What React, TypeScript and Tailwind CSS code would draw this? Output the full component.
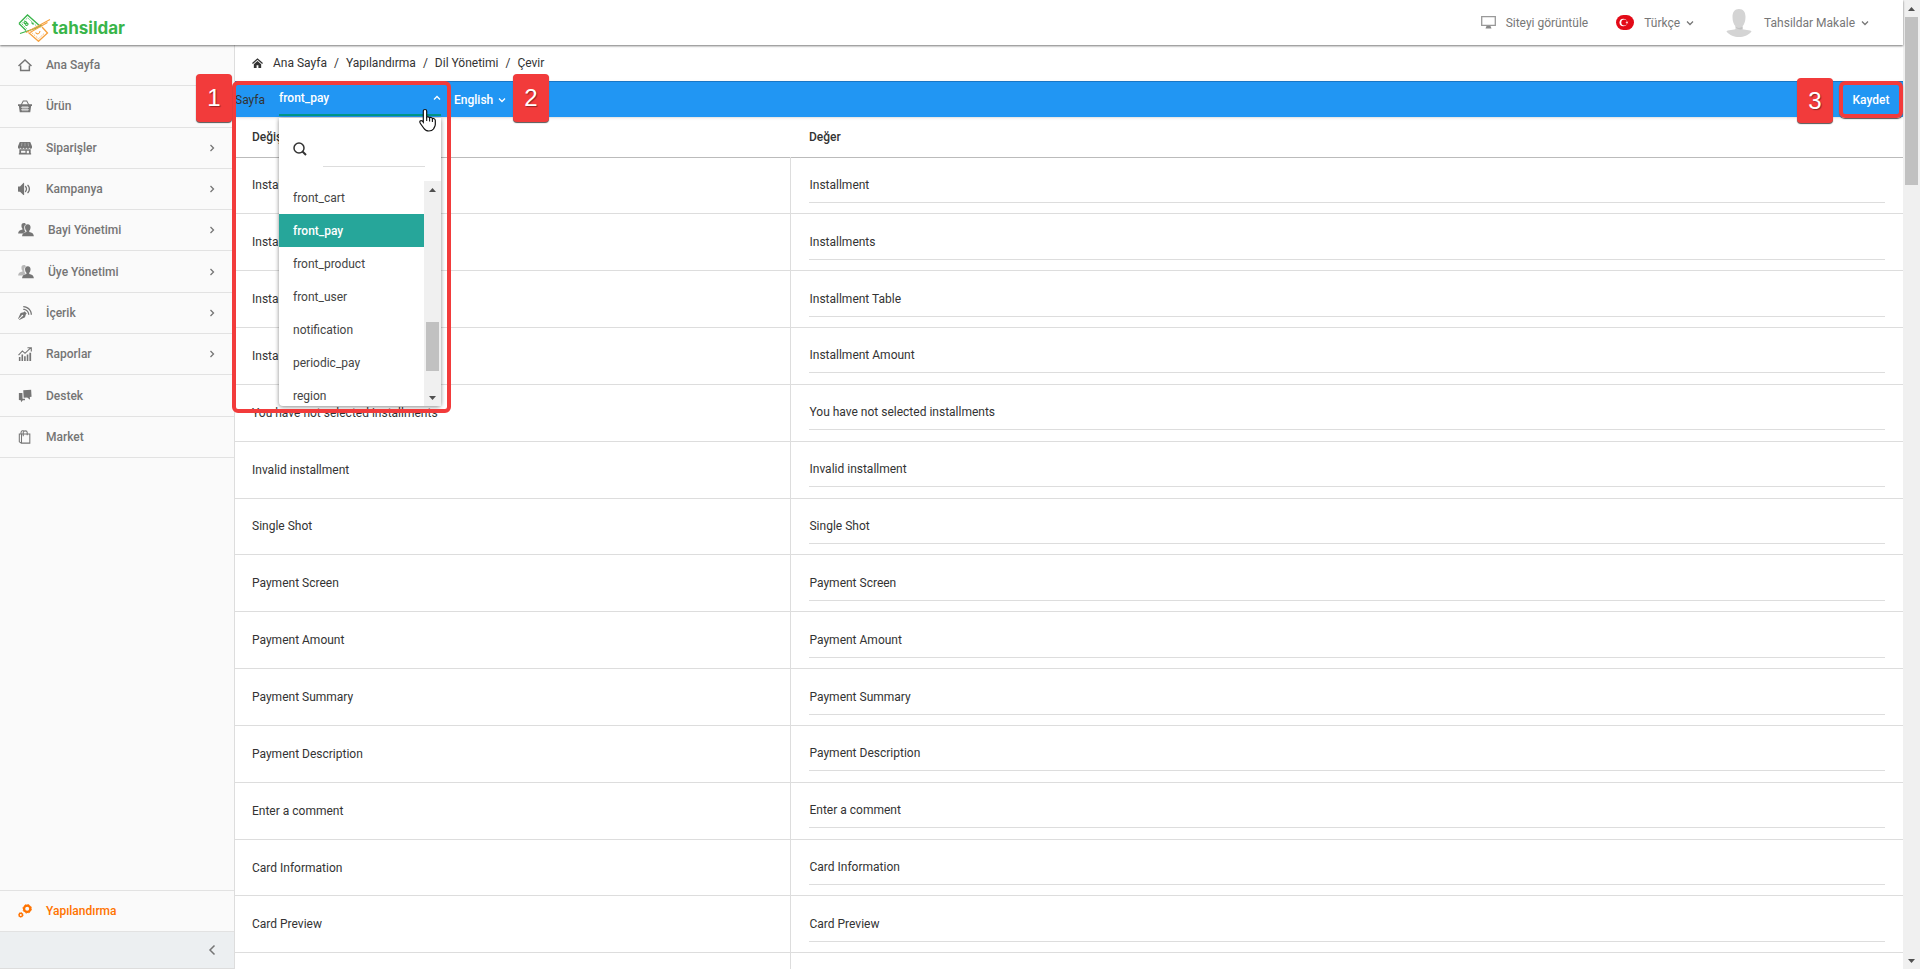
import { useState, type ReactNode, type SVGProps } from 'react';
import { ImBlog, ImVolumeMedium } from 'react-icons/im';

type IconProps = SVGProps<SVGSVGElement>;

interface NavEntry {
  label: string;
  icon: ReactNode;
  expandable?: boolean;
}

const ROWS = [
  'Installment',
  'Installments',
  'Installment Table',
  'Installment Amount',
  'You have not selected installments',
  'Invalid installment',
  'Single Shot',
  'Payment Screen',
  'Payment Amount',
  'Payment Summary',
  'Payment Description',
  'Enter a comment',
  'Card Information',
  'Card Preview',
];

const PAGES = [
  'front_cart',
  'front_pay',
  'front_product',
  'front_user',
  'notification',
  'periodic_pay',
  'region',
];

const CRUMBS = ['Ana Sayfa', 'Yapılandırma', 'Dil Yönetimi'];

function Chevron({ d, ...props }: IconProps & { d: string }) {
  return (
    <svg viewBox="0 0 8 8" width="8" height="8" fill="none" stroke="currentColor" strokeWidth="1.3" aria-hidden="true" {...props}>
      <path d={d} />
    </svg>
  );
}

const RIGHT = 'M2.5 1 5.5 4 2.5 7';
const DOWN = 'M1 2.5 4 5.5 7 2.5';
const UP = 'M1 5.5 4 2.5 7 5.5';

function HouseIcon() {
  return (
    <svg viewBox="0 0 16 16" width="14" height="14" fill="none" stroke="currentColor" strokeWidth="1.7" aria-hidden="true">
      <path d="M.6 9.2 8 2.2l7.4 7M3 8.5v5.8h10V8.5" />
    </svg>
  );
}

function BasketIcon() {
  return (
    <svg viewBox="0 0 16 16" width="14" height="14" aria-hidden="true">
      <path d="M3.5 7 6 2.2h4L12.5 7" fill="none" stroke="currentColor" strokeWidth="1.2" />
      <path d="M0 6h16v2h-1l-1 7H2L1 8H0z" fill="currentColor" />
      <path d="M3.5 9.5h9M3.5 12.3h9M5.7 8v6M8 8v6M10.3 8v6" stroke="#fafafa" strokeWidth=".8" />
    </svg>
  );
}

function StoreIcon() {
  return (
    <svg viewBox="0 0 16 16" width="14" height="14" fill="currentColor" aria-hidden="true">
      <path d="M2 1h12l2 5v1.300a1.500 1.500 0 0 1-3 .2 1.600 1.600 0 0 1-3.300 0 1.700 1.700 0 0 1-3.400 0 1.600 1.600 0 0 1-3.300 0A1.500 1.500 0 0 1 0 7.300V6z" />
      <path fillRule="evenodd" d="M1.500 9.500h13V14H15v1.500H1V14h.5zM3.500 11v2.500h5V11zm6.500 0v3h2.500v-3z" />
      <path d="M4.500 2 4 6M8 2v4M11.500 2l.5 4" stroke="#fafafa" strokeWidth=".4" />
    </svg>
  );
}

function UsersIcon({ faded }: { faded?: boolean }) {
  return (
    <svg viewBox="0 0 18 16" width="16" height="14" fill="currentColor" aria-hidden="true">
      <path
        opacity={faded ? 0.5 : 1}
        d="M6.800 0C4.600 0 3.600 1.400 3.800 3.500c.1 1.500.6 2.500 1.200 3v1C2 8 0 9.500 0 12h5.500c.7-1 1.700-1.600 3-2-1-1.300-1.600-3-1.500-5 0-1.600.7-2.700 2-3.300C8.500.6 7.900 0 6.800 0z"
      />
      <path d="M11 1.500c2.300 0 3.300 1.500 3.200 3.700-.1 1.700-.7 3-1.500 3.700v1.300c3 .4 5.300 2 5.300 5H4.500c0-3 2-4.600 5-5V8.900C8.600 8.200 8 6.900 7.900 5.200 7.800 3 8.800 1.500 11 1.500z" />
    </svg>
  );
}

function GrowthIcon() {
  return (
    <svg viewBox="0 0 16 16" width="14" height="14" aria-hidden="true">
      <path d="M.6 9.200 5 4.500l3 2.700L14.500 1M10.800.8h4.400v4.400" fill="none" stroke="currentColor" strokeWidth="1.300" />
      <path d="M1 11.500h1.800V16H1zM4 8.500h1.800V16H4zM7 10.500h1.800V16H7zM10 8.500h1.800V16H10zM13 6.500h2V16h-2z" fill="currentColor" />
    </svg>
  );
}

function TalkIcon() {
  return (
    <svg viewBox="0 0 16 16" width="14" height="14" fill="currentColor" aria-hidden="true">
      <path d="M6 1.500 15 .8l.5 8-2 .3.300 3.200-3.300-2.600L6.500 10z" />
      <path d="M1 4.500h4L5.200 11l2.800.2v1.600H5.500l-2 2.400-.3-2.400-2.200-.2z" />
    </svg>
  );
}

function BagIcon() {
  return (
    <svg viewBox="0 0 16 16" width="14" height="14" fill="none" stroke="currentColor" strokeWidth="1.2" aria-hidden="true">
      <path d="M4 4.500h9.500V15H4zM4 15.200 1.500 13.500v-9H4M6 7V2.500C6 .5 10.500.5 10.500 2.500V6M3.500 4.500v-2C4 .8 6 .6 7 1.200" />
    </svg>
  );
}

function CogsIcon() {
  return (
    <svg viewBox="0 0 16 16" width="14" height="14" fill="none" stroke="currentColor" aria-hidden="true">
      <circle cx="10.5" cy="5.5" r="3.6" strokeWidth="2.6" />
      <circle cx="10.5" cy="5.5" r="4.9" strokeWidth="1" strokeDasharray="1.9 1.95" />
      <circle cx="3.2" cy="12.5" r="1.9" strokeWidth="1.6" />
      <circle cx="3.2" cy="12.5" r="2.8" strokeWidth=".8" strokeDasharray="1.1 1.1" />
    </svg>
  );
}

function LogoMark() {
  return (
    <svg viewBox="0 0 33 28" width="33" height="28" fill="none" aria-hidden="true">
      <g stroke="#39b54a">
        <path d="M1 9.500 9.500 1 23 13M1 9.500 8 16.500" strokeWidth="1.3" />
        <path d="M3.800 9.600 9.600 3.800 18.500 12M4 10l5 5" strokeWidth=".7" strokeDasharray="2 1" />
        <path d="M2 19.500 17 14.500 24 11" strokeWidth="1.1" />
        <path d="M6.200 8.300c1-1.500 2.700-.8 2 1 1.800-.7 2.600 1.200 1 2-1.500.7-2-.8-1-2-1.500.7-2.500 0-2-1z" strokeWidth="1.1" />
        <path d="m13.500 8.500 2 2" strokeWidth="1.1" />
      </g>
      <g stroke="#f7a13d">
        <path d="M10.500 18.500 20.500 27.300 29.500 19 24 13" strokeWidth="1.3" />
        <path d="m13.500 18.500 7 6.300 6.200-5.800" strokeWidth=".7" strokeDasharray="2 1" />
        <path d="M8 18.500 32 5.500M12 18.500 29.500 8.500" strokeWidth="1.1" />
        <path d="M17.500 18.500c1.500 2 4 2 4.500-1.500" strokeWidth="1.1" />
      </g>
    </svg>
  );
}

function HandCursor() {
  return (
    <svg viewBox="0 0 18 24" width="18" height="24" aria-hidden="true">
      <path
        d="M6 1.500c1 0 1.700.7 1.700 1.700v6c.4-.7 2.600-.6 2.900.6.6-.6 2.500-.4 2.800.9.800-.5 2.900-.1 2.900 1.700v4.100c0 2-1.300 3.100-1.800 4.500-.9 1.300-2.500 2-4.700 2-2.800 0-4.100-1.200-5-2.800L1.400 15.500c-.9-1.300-.8-2.700.5-2.900 1.100-.2 1.800.6 2.400 1.500V3.200c0-1 .7-1.700 1.700-1.700z"
        fill="#fff"
        stroke="#111"
        strokeWidth="1.2"
      />
      <path d="M7.700 9v4M10.600 10v3.500M13.400 11v3" stroke="#111" strokeWidth="1.1" />
    </svg>
  );
}

const NAV: NavEntry[] = [
  { label: 'Ana Sayfa', icon: <HouseIcon /> },
  { label: 'Ürün', icon: <BasketIcon /> },
  { label: 'Siparişler', icon: <StoreIcon />, expandable: true },
  { label: 'Kampanya', icon: <ImVolumeMedium size={14} />, expandable: true },
  { label: 'Bayi Yönetimi', icon: <UsersIcon />, expandable: true },
  { label: 'Üye Yönetimi', icon: <UsersIcon faded />, expandable: true },
  { label: 'İçerik', icon: <ImBlog size={14} />, expandable: true },
  { label: 'Raporlar', icon: <GrowthIcon />, expandable: true },
  { label: 'Destek', icon: <TalkIcon /> },
  { label: 'Market', icon: <BagIcon /> },
];

function Topbar() {
  return (
    <header className="relative z-10 flex h-[45px] shrink-0 items-center justify-between bg-white pr-[34px] pl-[18px] shadow-[0_1px_2px_#0008]">
      <a href="#" className="flex items-center gap-px pt-[10px]">
        <LogoMark />
        <span className="font-[Inter] text-[17px] leading-5 font-bold text-[#39b54a]">tahsildar</span>
      </a>
      <div className="flex items-center text-[#777]">
        <a href="#" className="flex items-center gap-[10px]">
          <svg viewBox="0 0 15 13" width="15" height="13" aria-hidden="true">
            <path d="M.7.7h13.6v8.600H.7z" fill="none" stroke="#999" strokeWidth="1.3" />
            <path d="M5.500 10h4l1 2.500h-6z" fill="#888" />
          </svg>
          Siteyi görüntüle
        </a>
        <button type="button" className="ml-7 flex items-center">
          <svg viewBox="0 0 18 15" width="18" height="15" className="mr-[10px]" aria-hidden="true">
            <rect width="18" height="15" rx="7.5" fill="#e30a17" />
            <circle cx="7.3" cy="7.5" r="3.8" fill="#fff" />
            <circle cx="8.3" cy="7.5" r="3" fill="#e30a17" />
            <path d="m9.300 7.500 3-1-1.800 2.600V6l1.800 2.500z" fill="#fff" />
          </svg>
          Türkçe
          <Chevron d={DOWN} className="ml-[6px]" />
        </button>
        <button type="button" className="ml-8 flex items-center">
          <svg viewBox="0 0 26 28" width="26" height="28" className="mr-3" aria-hidden="true">
            <path d="M13 0c4.500 0 6.500 3 6.500 8 0 4-1.300 7.500-3 9.300V20c0 1 9 1 9 2.500C22 26.500 18 28 13 28S4 26.500.5 22.500C.5 21 9.500 21 9.500 20v-2.700c-1.700-1.800-3-5.300-3-9.300 0-5 2-8 6.500-8z" fill="#d4d4d4" />
            <path d="M9.500 17.300c1.800 2.200 5.200 2.200 7 0V20c-2 1-5 .5-7-2z" fill="#c2c2c2" />
          </svg>
          Tahsildar Makale
          <Chevron d={DOWN} className="ml-[6px]" />
        </button>
      </div>
    </header>
  );
}

function Sidebar() {
  return (
    <aside className="flex w-[235px] shrink-0 flex-col border-r border-[#ddd] bg-[#fafafa] text-[#757575]">
      <nav className="flex h-[413px] flex-col">
        {NAV.map((item) => (
          <a key={item.label} href="#" className="flex flex-1 items-center border-b border-[#e2e2e2] px-[18px] font-medium">
            <span className="mr-[14px] flex min-w-[14px]">{item.icon}</span>
            {item.label}
            {item.expandable && <Chevron d={RIGHT} className="ml-auto" />}
          </a>
        ))}
      </nav>
      <a href="#" className="mt-auto flex h-[42px] items-center gap-[14px] border-y border-[#e2e2e2] pl-[18px] font-medium text-[#ff7300]">
        <CogsIcon />
        Yapılandırma
      </a>
      <button type="button" aria-label="Menüyü daralt" className="flex h-[37px] items-center justify-end border-b border-[#ddd] bg-[#eceff1] pr-[18px]">
        <svg viewBox="0 0 8 12" width="8" height="12" fill="none" stroke="currentColor" strokeWidth="1.5" aria-hidden="true">
          <path d="M6.500 1.500 2 6l4.500 4.500" />
        </svg>
      </button>
    </aside>
  );
}

function Badge({ n, className }: { n: number; className: string }) {
  return (
    <span
      className={`absolute z-30 flex w-9 items-center justify-center rounded-sm bg-[#f23b3b] font-['Liberation_Sans',sans-serif] text-2xl font-normal text-white shadow-[0_1px_1px_#555] [text-shadow:1px_1px_1px_#0006] ${className}`}
    >
      {n}
    </span>
  );
}

function Scroller({ className, children }: { className: string; children: ReactNode }) {
  return (
    <div className={`flex w-[17px] shrink-0 flex-col items-center bg-[#f0f0f0] ${className}`} aria-hidden="true">
      <svg viewBox="0 0 17 17" width="17" height="17" className="shrink-0 fill-[#505050]">
        <path d="M5 11h7L8.500 7z" />
      </svg>
      {children}
      <svg viewBox="0 0 17 17" width="17" height="17" className="mt-auto shrink-0 fill-[#505050]">
        <path d="M5 7h7l-3.500 4z" />
      </svg>
    </div>
  );
}

function PageSelect() {
  const [page, setPage] = useState('front_pay');
  return (
    <div className="relative h-full w-[162px]">
      <button
        type="button"
        aria-haspopup="listbox"
        aria-expanded="true"
        aria-labelledby="page-label"
        className="flex h-[34px] w-full items-center justify-between border-b-2 border-[#009688] font-medium text-white"
      >
        {page}
        <Chevron d={UP} />
      </button>
      <div className="absolute top-9 left-0 z-10 w-full rounded-b-sm bg-white font-normal shadow-[0_1px_4px_#0007]">
        <div className="flex h-[63px] items-start gap-4 pt-4 pr-4 pl-[14px]">
          <svg viewBox="0 0 14 14" width="14" height="14" fill="none" stroke="#333" className="mt-2 shrink-0" aria-hidden="true">
            <circle cx="6" cy="6" r="5" strokeWidth="1.5" />
            <path d="m9.500 9.500 3.500 3.500" strokeWidth="2" />
          </svg>
          <input aria-label="Ara" className="h-[33px] w-full min-w-0 border-b border-[#ddd] outline-none" />
        </div>
        <div className="flex h-[225px]">
          <ul role="listbox" aria-labelledby="page-label" className="flex-1 overflow-hidden text-[#444]">
            {PAGES.map((name) => (
              <li
                key={name}
                role="option"
                aria-selected={name === page}
                onClick={() => setPage(name)}
                className="flex h-[33px] items-center pl-[14px] aria-selected:bg-[#26a69a] aria-selected:font-medium aria-selected:text-white"
              >
                {name}
              </li>
            ))}
          </ul>
          <Scroller className="h-full">
            <div className="mt-[124px] h-[49px] w-[13px] bg-[#c1c1c1]" />
          </Scroller>
        </div>
      </div>
      <div className="pointer-events-none absolute top-[26px] left-[140px] z-30">
        <HandCursor />
      </div>
    </div>
  );
}

function Toolbar() {
  return (
    <div className="relative z-20 flex h-9 shrink-0 items-center border-t border-[#1976c5] bg-[#2196f3] font-medium text-white shadow">
      <span id="page-label" className="w-11 font-normal text-[#333]">
        Sayfa
      </span>
      <PageSelect />
      <label className="ml-[13px] flex items-center">
        <span className="sr-only">Dil</span>
        <select className="appearance-none bg-transparent outline-none" defaultValue="English">
          <option>English</option>
        </select>
        <Chevron d={DOWN} className="ml-1" />
      </label>
      <button type="button" className="relative ml-auto h-full w-16 text-center">
        Kaydet
        <span className="absolute inset-x-0 -inset-y-px rounded-md border-4 border-[#f23b3b] shadow-[0_1px_1px_#555]" />
      </button>
      <div className="pointer-events-none absolute -top-px left-[-3px] z-20 h-[332px] w-[219px] rounded-md border-4 border-[#f23b3b]" />
      <Badge n={1} className="-top-2 left-[-39px] h-12" />
      <Badge n={2} className="-top-2 left-[278px] h-12" />
      <Badge n={3} className="-top-1 right-[70px] h-[45px]" />
    </div>
  );
}

export default function App() {
  return (
    <div className="flex h-screen overflow-hidden bg-white font-[Roboto,sans-serif] text-xs text-[#333]">
      <div className="flex min-w-0 flex-1 flex-col">
        <Topbar />
        <div className="flex min-h-0 flex-1">
          <Sidebar />
          <main className="flex min-w-0 flex-1 flex-col">
            <nav aria-label="Breadcrumb" className="flex h-9 shrink-0 items-center gap-[7px] pl-[17px]">
              <svg viewBox="0 0 12 12" width="11" height="11" className="mr-[3px]" aria-hidden="true">
                <path d="M.5 6 6 1.200 11.500 6" fill="none" stroke="#333" strokeWidth="1.4" />
                <path d="M2 6.800 6 3.300l4 3.500V11H7V8H5v3H2z" fill="#333" />
              </svg>
              {CRUMBS.map((crumb) => (
                <span key={crumb} className="flex gap-[7px]">
                  <a href="#">{crumb}</a>
                  <span>/</span>
                </span>
              ))}
              <span>Çevir</span>
            </nav>
            <Toolbar />
            <div className="min-h-0 flex-1 overflow-hidden">
              <table className="h-[calc(100vh-77px)] w-full table-fixed border-collapse">
                <thead>
                  <tr className="h-10 border-b border-[#bbb] text-left">
                    <th className="w-1/3 px-[17px] font-medium">Değişken</th>
                    <th className="px-[18px] font-medium">Değer</th>
                  </tr>
                </thead>
                <tbody>
                  {ROWS.map((text, i) => (
                    <tr key={text} className="border-b border-[#ddd]">
                      <td className="border-r border-[#ddd] px-[17px]">{text}</td>
                      <td className="px-[18px]">
                        <input
                          defaultValue={text}
                          aria-label={`Değer ${i + 1}`}
                          className="block h-[35px] w-full border-b border-[#ddd] outline-none"
                        />
                      </td>
                    </tr>
                  ))}
                  <tr>
                    <td className="border-r border-[#ddd] px-[17px]" />
                    <td className="px-[18px]">
                      <div className="h-[35px]" />
                    </td>
                  </tr>
                </tbody>
              </table>
            </div>
          </main>
        </div>
      </div>
      <Scroller className="h-full">
        <div className="h-[168px] w-[13px] bg-[#c1c1c1]" />
      </Scroller>
    </div>
  );
}
